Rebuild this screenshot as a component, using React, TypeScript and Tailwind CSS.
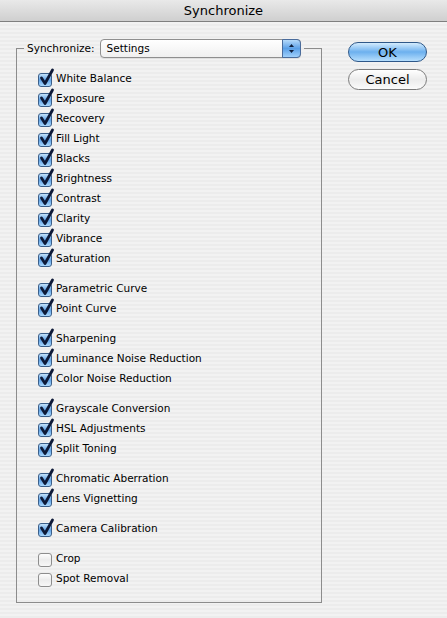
import React from 'react';

const groups: { label: string; checked: boolean }[][] = [
  [
    { label: 'White Balance', checked: true },
    { label: 'Exposure', checked: true },
    { label: 'Recovery', checked: true },
    { label: 'Fill Light', checked: true },
    { label: 'Blacks', checked: true },
    { label: 'Brightness', checked: true },
    { label: 'Contrast', checked: true },
    { label: 'Clarity', checked: true },
    { label: 'Vibrance', checked: true },
    { label: 'Saturation', checked: true },
  ],
  [
    { label: 'Parametric Curve', checked: true },
    { label: 'Point Curve', checked: true },
  ],
  [
    { label: 'Sharpening', checked: true },
    { label: 'Luminance Noise Reduction', checked: true },
    { label: 'Color Noise Reduction', checked: true },
  ],
  [
    { label: 'Grayscale Conversion', checked: true },
    { label: 'HSL Adjustments', checked: true },
    { label: 'Split Toning', checked: true },
  ],
  [
    { label: 'Chromatic Aberration', checked: true },
    { label: 'Lens Vignetting', checked: true },
  ],
  [{ label: 'Camera Calibration', checked: true }],
  [
    { label: 'Crop', checked: false },
    { label: 'Spot Removal', checked: false },
  ],
];

const Checkbox: React.FC<{ checked: boolean }> = ({ checked }) => (
  <span className="relative inline-block w-[14px] h-[14px] mt-[1px] shrink-0">
    {checked ? (
      <span className="absolute inset-0 rounded-[3px] border border-[#3b5f8a] bg-gradient-to-b from-[#c4e2fa] via-[#5fa4e8] to-[#a9d6fb]" />
    ) : (
      <span className="absolute inset-0 rounded-[3px] border border-[#8d8d8d] bg-gradient-to-b from-[#fdfdfd] via-[#ececec] to-[#f7f7f7]" />
    )}
    {checked && (
      <svg className="absolute left-[1px] top-[-4px] overflow-visible" width="15" height="17" viewBox="0 0 15 17">
        <path d="M2.5 9 L6 14.5 L13.5 1" fill="none" stroke="#0e1a38" strokeWidth="2.8" strokeLinecap="round" strokeLinejoin="round" />
      </svg>
    )}
  </span>
);

const App: React.FC = () => {
  return (
    <div
      className="w-[447px] h-[618px] overflow-hidden flex flex-col bg-[image:repeating-linear-gradient(180deg,#ececec_0px,#ececec_2px,#f2f2f2_2px,#f2f2f2_4px)] text-black"
      style={{ fontFamily: '"Lucida Grande", "DejaVu Sans", sans-serif' }}
    >
      {/* Title bar */}
      <div className="h-[22px] shrink-0 flex items-center justify-center bg-gradient-to-b from-[#e9e9e9] to-[#cfcfcf] border-b border-[#7f7f7f] text-[13px]">
        Synchronize
      </div>

      <div className="flex">
        {/* Settings group */}
        <fieldset className="ml-[16px] mt-[17px] w-[306px] min-w-0 h-[564px] border border-[#8c8c8c] p-0">
          <legend className="ml-[7px] px-[3px] flex items-center gap-[5px] text-[10.5px]">
            <span>Synchronize:</span>
            <span className="relative flex items-center w-[201px] h-[19px] rounded-[4px] border border-[#8f8f8f] bg-gradient-to-b from-[#ffffff] to-[#f0f0f0] shadow-[0_1px_0_rgba(0,0,0,0.08)]">
              <span className="pl-[6px]">Settings</span>
              <span className="absolute right-[-1px] top-[-1px] w-[19px] h-[19px] rounded-r-[4px] border border-[#4a6c9c] bg-gradient-to-b from-[#b5dafa] via-[#5a9fe6] to-[#9fd0fb] flex items-center justify-center">
                <svg width="7" height="11" viewBox="0 0 7 11">
                  <path d="M3.5 1 L6 4 L1 4 Z" fill="#10213f" />
                  <path d="M3.5 10 L6 7 L1 7 Z" fill="#10213f" />
                </svg>
              </span>
            </span>
          </legend>

          <div className="pl-[21px] pt-[11px] flex flex-col gap-[10px] text-[10.5px]">
            {groups.map((group, gi) => (
              <div key={gi} className="flex flex-col">
                {group.map((item) => (
                  <div key={item.label} className="h-[20px] flex items-center gap-[4px]">
                    <Checkbox checked={item.checked} />
                    <span>{item.label}</span>
                  </div>
                ))}
              </div>
            ))}
          </div>
        </fieldset>

        {/* Buttons */}
        <div className="ml-[26px] mt-[20px] flex flex-col gap-[7px] text-[13px]">
          <button className="w-[79px] h-[20px] rounded-full border border-[#2f5889] bg-gradient-to-b from-[#d3ebfd] via-[#6cb0ee] to-[#b6defc] flex items-center justify-center leading-none">
            OK
          </button>
          <button className="w-[79px] h-[21px] rounded-full border border-[#7c7c7c] bg-gradient-to-b from-[#ffffff] via-[#ececec] to-[#fbfbfb] flex items-center justify-center leading-none">
            Cancel
          </button>
        </div>
      </div>
    </div>
  );
};

export default App;
